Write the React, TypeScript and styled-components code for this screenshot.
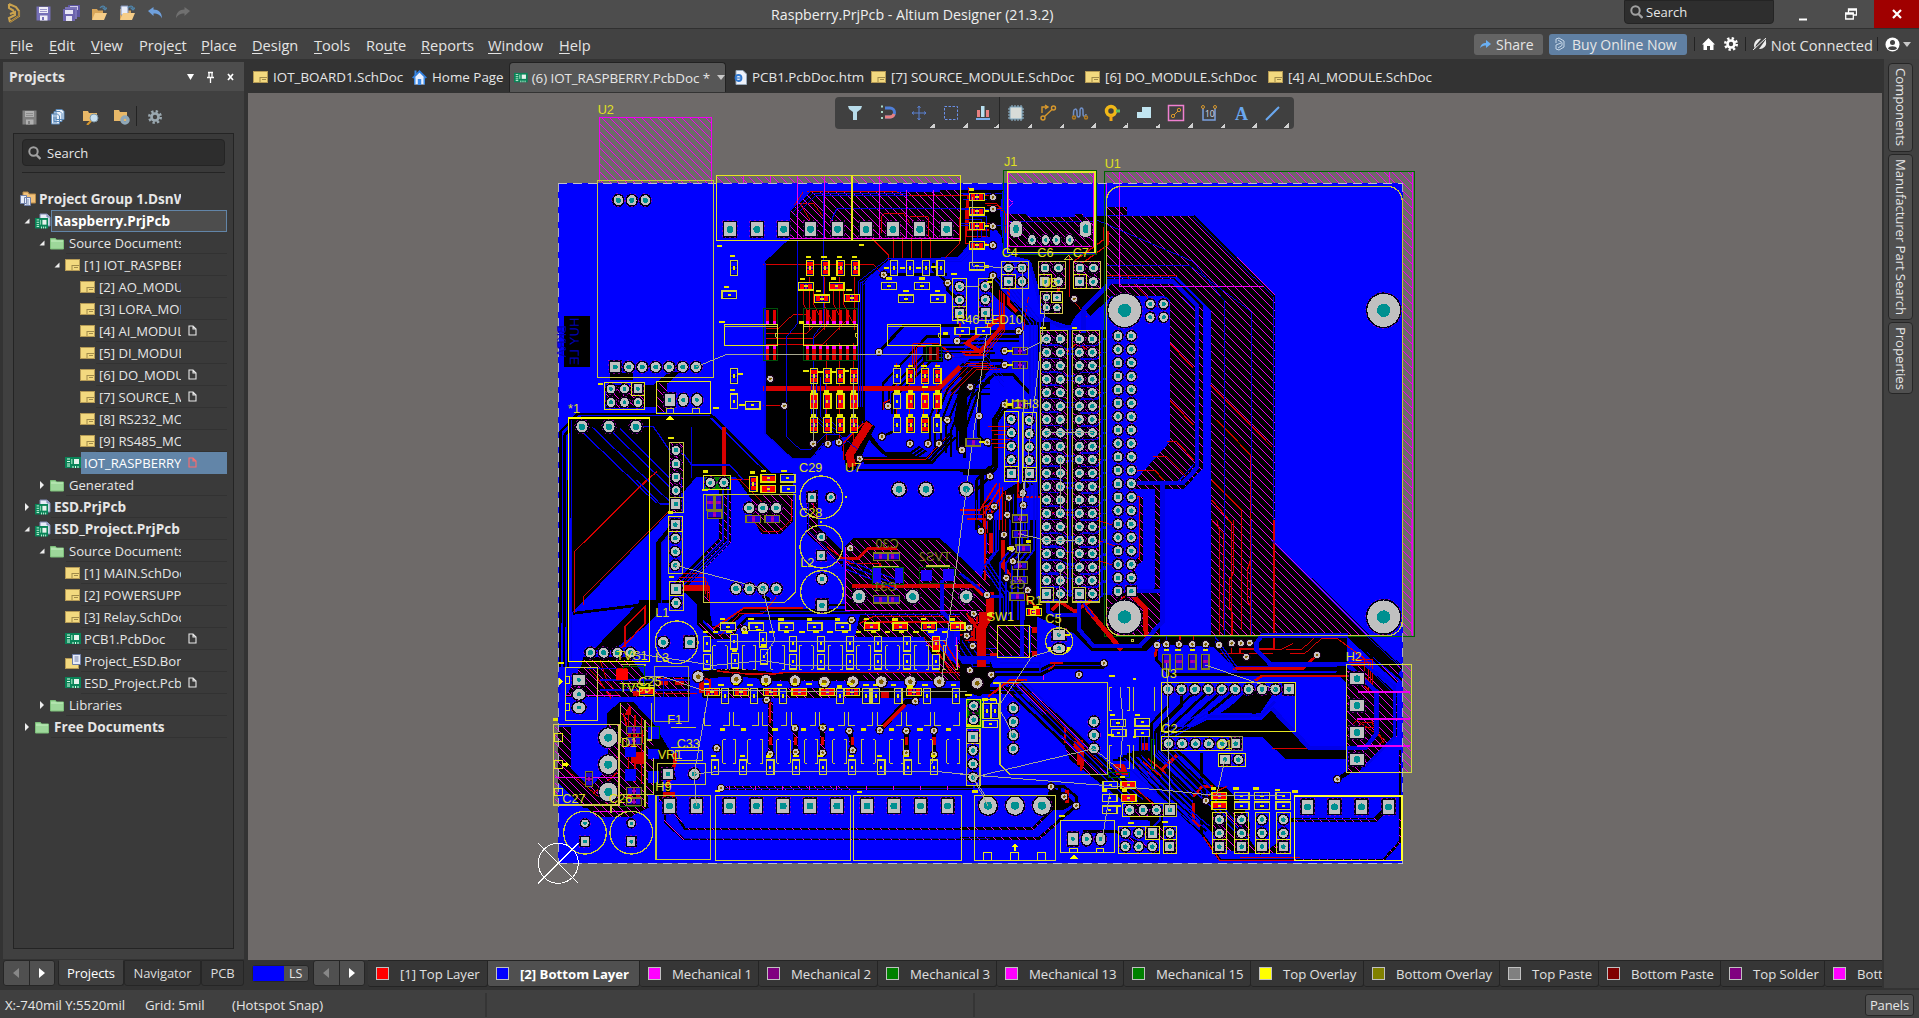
import React from 'react';
import styled, { createGlobalStyle, css } from 'styled-components';

const UI = `"Open Sans", "Noto Sans", sans-serif`;

const GlobalStyle = createGlobalStyle`
  * { box-sizing: border-box; }
  html, body { margin: 0; padding: 0; background: #333; overflow: hidden; }
  body { font-family: ${UI}; color: #e6e6e6; }
`;

/* ---------- shell ---------- */
const Shell = styled.div`
  width: 1919px; height: 1018px; display: flex; flex-direction: column; overflow: hidden; background: #333;
`;
const TitleBar = styled.header`
  height: 29px; flex: none; display: flex; background: #4d4d4d; border-bottom: 1px solid #303030;
`;
const QuickIcons = styled.div`
  width: 771px; display: flex; align-items: center; padding: 0 0 2px 6px;
`;
const QuickCell = styled.span<{ $w: number }>`
  width: ${p => p.$w}px; display: flex; align-items: center;
`;
const WindowTitle = styled.div`
  width: 853px; line-height: 29px; font-size: 14.2px; letter-spacing: 0; white-space: nowrap; color: #efefef;
`;
const TitleSearch = styled.div`
  width: 150px; height: 24px; background: #2e2e2e; border: 1px solid #242424; border-radius: 0 0 4px 4px;
  display: flex; align-items: center; gap: 3px; padding-left: 5px; font-size: 13px;
`;
const WinButton = styled.div<{ $w: number; $close?: boolean }>`
  width: ${p => p.$w}px; height: 28px; display: flex; align-items: center; justify-content: center;
  background: ${p => (p.$close ? '#a00000' : 'transparent')};
`;
const MenuBar = styled.nav`
  height: 30px; flex: none; display: flex; align-items: center; background: #424242; padding-left: 10px;
`;
const MenuItem = styled.span<{ $w: number }>`
  width: ${p => p.$w}px; font-size: 14.6px; line-height: 30px; padding-top: 1px; white-space: nowrap; color: #e4e4e4;
  u { text-underline-offset: 2px; }
`;
const MenuRight = styled.div`
  margin-left: auto; display: flex; align-items: center; padding-right: 8px; height: 30px;
`;
const Pill = styled.div<{ $w: number; $blue?: boolean; $gap: number }>`
  width: ${p => p.$w}px; height: 21px; border-radius: 3px; display: flex; align-items: center; gap: ${p => p.$gap}px;
  padding-left: 6px; margin-right: 6px; font-size: 14px; white-space: nowrap;
  background: ${p => (p.$blue ? '#6080a3' : '#646464')};
`;
const Divider = styled.i<{ $l: number; $r: number; $h?: number }>`
  width: 1px; height: ${p => p.$h ?? 14}px; background: #232323; margin: 0 ${p => p.$r}px 0 ${p => p.$l}px; flex: none;
`;
const Body = styled.div`
  height: 929px; flex: none; display: flex;
`;

/* ---------- left panel ---------- */
const LeftColumn = styled.aside`
  width: 248px; padding: 3px 4px 0 3px; display: flex; flex-direction: column; flex: none;
`;
const PanelHead = styled.div`
  height: 29px; flex: none; background: #4d4d4d; display: flex; align-items: center; padding-left: 6px;
  font-weight: 700; font-size: 13.8px;
`;
const PanelHeadTitle = styled.span`width: 178px; flex: none;`;
const PanelBody = styled.div`
  height: 868px; background: #404040; padding: 15px 10px 10px; display: flex; flex-direction: column;
`;
const PanelTools = styled.div`
  height: 27px; display: flex; align-items: flex-start; padding-left: 9px;
`;
const ToolCell = styled.span<{ $w: number }>`
  width: ${p => p.$w}px; display: flex; height: 22px; align-items: center;
`;
const TreeBox = styled.div`
  flex: 1; background: #3a3a3a; border: 1px solid #242424; padding: 5px 0 0; overflow: hidden;
`;
const TreeSearch = styled.div`
  margin: 0 8px; height: 27px; border-radius: 4px; background: #2d2d2d; border: 1px solid #242424;
  display: flex; align-items: center; gap: 6px; padding-left: 5px; font-size: 13px;
`;
const TreeRule = styled.div`height: 1px; margin: 6px 8px 15px; background: #242424;`;
const Row = styled.div<{ $indent: number }>`
  height: 22px; display: flex; align-items: center; padding-left: ${p => p.$indent}px;
`;
const ArrowCell = styled.span`width: 15px; padding-left: 4px; display: flex; flex: none;`;
const IconCell = styled.span`width: 16px; display: flex; flex: none;`;
const Label = styled.div<{ $w: number; $mode?: 'focus' | 'select'; $rule: boolean }>`
  width: ${p => p.$w}px; height: 22px; display: flex; align-items: center; padding-left: 3px; flex: none;
  border-bottom: 1px solid ${p => (p.$rule ? '#323232' : 'transparent')};
  ${p => p.$mode === 'focus' && css`background: #4d4d4d; border: 1px solid #6285a8; padding-left: 2px; color: #fff;`}
  ${p => p.$mode === 'select' && css`background: #6285a8; border-color: #6285a8; color: #fff;`}
`;
const Name = styled.span<{ $w: number; $bold?: boolean }>`
  width: ${p => p.$w}px; overflow: hidden; white-space: nowrap; font-size: ${p => (p.$bold ? 13.6 : 13.1)}px;
  font-weight: ${p => (p.$bold ? 700 : 400)}; line-height: 20px; flex: none; margin-right: 7px;
`;
const BottomTabs = styled.div`
  height: 27px; display: flex; margin-top: 1px; padding-top: 0;
`;
const ArrowPair = styled.div<{ $w: number }>`
  width: ${p => p.$w}px; height: 26px; display: flex; background: #505050; border: 1px solid #262626; border-radius: 3px; flex: none;
  span { flex: 1; display: flex; align-items: center; justify-content: center; }
  span + span { border-left: 1px solid #262626; }
`;
const PanelTab = styled.div<{ $w: number; $active?: boolean }>`
  width: ${p => p.$w}px; height: 26px; text-align: center; line-height: 25px; font-size: 13px; letter-spacing: -0.1px;
  background: ${p => (p.$active ? '#404040' : '#333')}; border: 1px solid #262626; border-top-color: ${p => (p.$active ? '#404040' : '#262626')};
  color: ${p => (p.$active ? '#fff' : '#dcdcdc')}; border-radius: 0 0 3px 3px;
`;

/* ---------- center ---------- */
const Center = styled.main`width: 1634px; flex: none; display: flex; flex-direction: column;`;
const DocTabs = styled.div`height: 34px; flex: none; display: flex; padding: 3px 0 0 5px;`;
const DocTab = styled.div<{ $w: number; $gap: number; $active?: boolean }>`
  width: ${p => p.$w}px; height: 30px; display: flex; align-items: center; gap: ${p => p.$gap}px; font-size: 13.4px;
  white-space: nowrap; flex: none;
  ${p => p.$active && css`background: #575757; border: 1px solid #222; border-bottom: 0; border-radius: 4px 4px 0 0; padding-left: 4px; margin-right: 8px; letter-spacing: -0.06px;`}
`;
const TabCaret = styled.i`
  border: 4.5px solid transparent; border-top: 5px solid #c8c8c8; border-bottom: 0; margin-left: 3px;
`;
const Canvas = styled.section`
  height: 867px; flex: none; background: #6e6a69; position: relative; overflow: hidden;
  > svg { display: block; }
`;
const ActiveBar = styled.div`
  position: absolute; left: 587px; top: 4px; width: 459px; height: 32px; background: #404040; border-radius: 4px;
  display: flex; padding-left: 4px;
`;
const ActiveCell = styled.span<{ $menu?: boolean; $line?: boolean }>`
  width: 32.15px; height: 32px; display: flex; align-items: center; justify-content: center; flex: none;
  ${p => p.$menu && css`background: linear-gradient(135deg, transparent 50%, #d0d0d0 50%) right 0 bottom 1px / 5px 5px no-repeat;`}
  ${p => p.$line && css`border-right: 1px solid #262626;`}
`;
const LayerBar = styled.div`height: 28px; flex: none; display: flex; padding-left: 4px; overflow: hidden;`;
const LayerSet = styled.div`
  width: 57px; height: 17px; margin: 5px 4px 0 0; display: flex; background: #505050; border: 1px solid #282828; border-radius: 3px; flex: none;
  font-size: 12.5px; line-height: 16px;
  i { width: 31px; background: #00f; margin-right: 5px; }
`;
const LayerTab = styled.div<{ $w: number; $active?: boolean }>`
  width: ${p => p.$w}px; height: 27px; flex: none; display: flex; align-items: center; gap: 11px; padding-left: 8px;
  font-size: 13.2px; letter-spacing: -0.02px; white-space: nowrap; border: 1px solid #242424; border-left-width: 0; border-radius: 0 0 3px 3px;
  background: ${p => (p.$active ? '#505050' : '#363636')}; font-weight: ${p => (p.$active ? 700 : 400)};
  color: ${p => (p.$active ? '#fff' : '#e0e0e0')};
`;
const Swatch = styled.i<{ $c: string }>`
  width: 13px; height: 13px; border: 1px solid #c0c0c0; background: ${p => p.$c}; flex: none;
`;

/* ---------- right & status ---------- */
const RightBar = styled.aside`
  flex: 1; padding: 4px 6px 0; display: flex; flex-direction: column; gap: 2px; align-items: flex-end;
  background: linear-gradient(90deg, #333 2px, #404040 2px);
`;
const SideTab = styled.div<{ $h: number }>`
  width: 25px; height: ${p => p.$h}px; writing-mode: vertical-rl; text-align: center; line-height: 23px; font-size: 13.2px;
  background: #505050; border: 1px solid #262626; border-radius: 4px; letter-spacing: -0.1px; white-space: nowrap;
`;
const Status = styled.footer`
  height: 30px; background: #404040; border-top: 2px solid #333; display: flex; align-items: center; padding: 1px 0 0 5px;
  font-size: 13.2px; position: relative; flex: none;
`;
const StatusCell = styled.span<{ $w: number }>`width: ${p => p.$w}px; white-space: nowrap; letter-spacing: 0;`;
const StatusRule = styled.i<{ $r: number }>`width: 2px; height: 24px; background: #353535; margin-right: ${p => p.$r}px;`;
const PanelsButton = styled.div`
  width: 49px; height: 22px; background: #505050; border: 1px solid #262626; border-radius: 3px; line-height: 20px; text-align: center;
  font-size: 13px; letter-spacing: -0.1px;
`;

/* ---------- icons ---------- */
const Magnifier = () => (
  <svg width="13" height="14" viewBox="0 0 13 14"><circle cx="5.5" cy="5.5" r="4.2" fill="none" stroke="#a0a0a0" strokeWidth="2" /><path d="M8.5 9l4 4" stroke="#a0a0a0" strokeWidth="2.4" /></svg>
);
const SchIcon = () => (
  <svg width="15" height="12" viewBox="0 0 15 12"><rect x=".5" y=".5" width="14" height="11" fill="#f3d97f" stroke="#b59a55" /><path d="M7 6.500h7M9 8.500h4M7 6v5" stroke="#a08a4a" /></svg>
);
const PcbShape = ({ y = 0 }: { y?: number }) => (
  <g transform={`translate(0 ${y})`}><rect width="16" height="11" fill="#0a8458" /><path d="M2 2h3M2 4.500h3M2 7h3M2 9h3M8 9v2M10.500 9v2M13 9v2" stroke="#d8ffe8" /><rect x="9" y="2" width="5" height="5" fill="#e6f3ec" /><rect x="6" y="2" width="1.500" height="5" fill="#7fd0a8" /></g>
);
const PcbIcon = () => <svg width="16" height="12" viewBox="0 0 16 12"><PcbShape /></svg>;
const PrjIcon = () => (
  <svg width="16" height="16" viewBox="0 0 16 16"><path d="M5 1h7l3 3v9H5z" fill="#e8ecf8" stroke="#7d86b0" /><path d="M12 1v3h3" fill="#aab4d8" stroke="#7d86b0" /><g transform="translate(0 5) scale(.82 .95)"><PcbShape /></g></svg>
);
const FolderIcon = () => (
  <svg width="14" height="13" viewBox="0 0 14 13"><path d="M.5 12V1.500h5l1 1.500h7v9z" fill="#9dd79a" stroke="#7cbf7a" /><path d="M1 4h12" stroke="#c6f0c2" /></svg>
);
const GroupIcon = () => (
  <svg width="16" height="16" viewBox="0 0 16 16"><path d="M3 1h5l1 2h6.500v9H3z" fill="#f0c07a" stroke="#b98b48" /><path d="M.5 4.500h6v8h-6zM4.500 6.500h6v8h-6z" fill="#e6ecf8" stroke="#6f7fa8" /><path d="M6 9h3M6 11h3M6 13h3" stroke="#7f90b8" /></svg>
);
const BomIcon = () => (
  <svg width="16" height="15" viewBox="0 0 16 15"><rect x=".5" y="4.500" width="13" height="10" fill="#f3d97f" stroke="#b59a55" /><path d="M7.500.5h8v10h-8z" fill="#e8ecf8" stroke="#6f7fa8" /><path d="M9.500 3h4M9.500 5h4M9.500 7h4" stroke="#6f7fa8" /></svg>
);
const DocMark = ({ c = '#e8e8e8' }: { c?: string }) => (
  <svg width="9" height="11" viewBox="0 0 9 11"><path d="M1 1h4l3 3v6H1zM5 1v3h3" fill="none" stroke={c} strokeWidth="1.100" /></svg>
);
const Twist = ({ open }: { open: boolean }) => (
  <svg width="6" height="8" viewBox="0 0 6 8">{open ? <path d="M5.500 1.500v5H.5z" fill="#eee" /> : <path d="M1 0v8l4-4z" fill="#eee" />}</svg>
);
const Tri = ({ left, c }: { left?: boolean; c: string }) => (
  <svg width="6" height="10" viewBox="0 0 6 10"><path d={left ? 'M6 0v10L0 5z' : 'M0 0v10l6-5z'} fill={c} /></svg>
);
const Disk = ({ c, l }: { c: string; l: string }) => (
  <svg width="15" height="15" viewBox="0 0 15 15"><path d="M.5.5h14v14H.5z" fill={c} /><path d="M3 1h9v6H3z" fill={l} /><path d="M4 9.500h7.500v5H4z" fill={l} /><path d="M6 11h2v3H6z" fill={c} /><path d="M4 3.500h7M4 5.500h7" stroke={c} strokeWidth=".7" /></svg>
);
const DiskStack = () => (
  <svg width="17" height="16" viewBox="0 0 17 16"><path d="M5 0h12v12H5z" fill="#5d55a0" /><path d="M7 1h8v4H7z" fill="#cfcbe8" /><path d="M2 2h12v12H2z" fill="#7b74b8" /><path d="M0 4h12v12H0z" fill="#6c64ae" /><path d="M2 5h8v4H2zM3 11h6v5H3z" fill="#e8e6f6" /></svg>
);
const OpenFolder = ({ doc }: { doc?: boolean }) => (
  <svg width="16" height="16" viewBox="0 0 16 16"><path d="M1 15V4h5l1 1.500h5V8" fill="#d9a65a" />{doc && <path d="M2 1h7v9H2z" fill="#e8ecf8" stroke="#7f90b8" />}<path d="M1 15L4 8h12l-3 7z" fill="#f6cd88" /><path d="M9 3c2-3 5-2 5 0m-2 0h4l-2 2z" fill="none" stroke="#4f83a8" strokeWidth="1.200" /></svg>
);
const Undo = ({ c, flip }: { c: string; flip?: boolean }) => (
  <svg width="15" height="13" viewBox="0 0 15 13"><path transform={flip ? 'matrix(-1 0 0 1 15 0)' : undefined} d="M0 4l5.500-4v2.500c5 0 8.500 3 8.500 9-1.500-3.500-4-5-8.500-5V9z" fill={c} /></svg>
);
const Gear = ({ s, c, h }: { s: number; c: string; h: string }) => (
  <svg width={s} height={s} viewBox="0 0 16 16"><circle cx="8" cy="8" r="6.500" fill="none" stroke={c} strokeWidth="3" strokeDasharray="2.600 2.500" /><circle cx="8" cy="8" r="5.500" fill={c} /><circle cx="8" cy="8" r="2.500" fill={h} /></svg>
);
const House = ({ blue }: { blue?: boolean }) => blue ? (
  <svg width="15" height="16" viewBox="0 0 15 16"><path d="M2.500 8v7.500h10V8l-5-5z" fill="#e8f0ff" /><path d="M0 8.500L7.500 1 15 8.500l-1.500 1-6-6-6 6z" fill="#2f7fe0" /><path d="M2.500 1.500h2V5l-2 1.500zM5.800 10h3.400v6H5.800zM2 9v6.500h1.500V8zM13 9v6.500h-1.500V8z" fill="#3d8be8" /></svg>
) : (
  <svg width="13" height="12" viewBox="0 0 13 12"><path d="M6.500 0L13 6.500h-1.500V12H8V8H5v4H1.500V6.500H0z" fill="#fff" /></svg>
);
const Logo = () => (
  <svg width="15" height="20" viewBox="0 0 15 20"><path d="M3 1l7 3 3 4v5L4 19M4 19l-1-4 6-3V9L4 11M3 1v4l5 3" fill="none" stroke="#c9a24e" strokeWidth="2.100" /><path d="M13 8v5L4 19" stroke="#8d6c30" strokeWidth="1" fill="none" /></svg>
);

/* ---------- left tree data ---------- */
type Node = { i: number; t: string; k: 'group' | 'prj' | 'folder' | 'sch' | 'pcb' | 'bom'; o?: boolean; b?: boolean; m?: 'focus' | 'select'; d?: string; n?: boolean };
const tree: Node[] = [
  { i: 20, t: 'Project Group 1.DsnWrk', k: 'group', b: true, n: true },
  { i: 35, t: 'Raspberry.PrjPcb', k: 'prj', o: true, b: true, m: 'focus' },
  { i: 50, t: 'Source Documents', k: 'folder', o: true },
  { i: 65, t: '[1] IOT_RASPBERRY', k: 'sch', o: true },
  { i: 80, t: '[2] AO_MODULE', k: 'sch' },
  { i: 80, t: '[3] LORA_MODULE', k: 'sch' },
  { i: 80, t: '[4] AI_MODULE', k: 'sch', d: '#e8e8e8' },
  { i: 80, t: '[5] DI_MODULE', k: 'sch' },
  { i: 80, t: '[6] DO_MODULE', k: 'sch', d: '#e8e8e8' },
  { i: 80, t: '[7] SOURCE_MODULE', k: 'sch', d: '#e8e8e8' },
  { i: 80, t: '[8] RS232_MODULE', k: 'sch' },
  { i: 80, t: '[9] RS485_MODULE', k: 'sch' },
  { i: 65, t: 'IOT_RASPBERRY.PcbDoc', k: 'pcb', m: 'select', d: '#ff6a6a' },
  { i: 50, t: 'Generated', k: 'folder', o: false },
  { i: 35, t: 'ESD.PrjPcb', k: 'prj', o: false, b: true },
  { i: 35, t: 'ESD_Project.PrjPcb', k: 'prj', o: true, b: true },
  { i: 50, t: 'Source Documents', k: 'folder', o: true },
  { i: 65, t: '[1] MAIN.SchDoc', k: 'sch' },
  { i: 65, t: '[2] POWERSUPPLY', k: 'sch' },
  { i: 65, t: '[3] Relay.SchDoc', k: 'sch' },
  { i: 65, t: 'PCB1.PcbDoc', k: 'pcb', d: '#e8e8e8' },
  { i: 65, t: 'Project_ESD.BomDoc', k: 'bom' },
  { i: 65, t: 'ESD_Project.PcbDoc', k: 'pcb', d: '#e8e8e8' },
  { i: 50, t: 'Libraries', k: 'folder', o: false },
  { i: 35, t: 'Free Documents', k: 'folder', o: false, b: true },
];
const iconFor = { group: GroupIcon, prj: PrjIcon, folder: FolderIcon, sch: SchIcon, pcb: PcbIcon, bom: BomIcon };

const layers: [string, string, number, boolean?][] = [
  ['[1] Top Layer', '#ff0000', 120], ['[2] Bottom Layer', '#0000ff', 152, true], ['Mechanical 1', '#ff00ff', 119],
  ['Mechanical 2', '#800080', 119], ['Mechanical 3', '#008000', 119], ['Mechanical 13', '#ff00ff', 127],
  ['Mechanical 15', '#008000', 127], ['Top Overlay', '#ffff00', 113], ['Bottom Overlay', '#808000', 136],
  ['Top Paste', '#808080', 99], ['Bottom Paste', '#800000', 122], ['Top Solder', '#800080', 104], ['Bottom Solder', '#ff00ff', 130],
];

/* ---------- board data: four tiles, each unit a third of a pixel ---------- */
type Trace = [string, number, number?, number?, number?];
type Dot = [number, number, number?];
type Pad = [number, number, number, number, number, boolean?];
type Part = [number, number, 'v' | 'h', 'r' | 'b' | 'o'];
type Box = [number, number, number, number, string?, number?];
type Tag = [number, number, string, boolean?];
interface Tile {
  x: number; y: number; voids: string[]; cuts: Trace[]; hatch: string[]; blue: Trace[]; red: Trace[]; mag: Trace[];
  green: Box[]; boxes: Box[]; lines: Trace[]; fills: [string, string][]; pads: Pad[]; vias: Dot[]; parts: Part[]; rats: string[]; tags: Tag[]; blobs: Dot[];
}
const run = (x: number, y: number, dx: number, dy: number, n: number, w: number, h: number, o: number, sq?: number): Pad[] =>
  Array.from({ length: n }, (_, i) => [x + dx * i, y + dy * i, w, h, o, sq === -1 || sq === i] as Pad);
const grid = (xs: number[], y: number, k: 'v' | 'h', c: 'r' | 'b' | 'o'): Part[] => xs.map(x => [x, y, k, c] as Part);
const pairs = (xs: number[], y1: number, y2: number): Trace[] =>
  xs.map((x, i) => [i % 2 ? `M${x - 8},${y1}H${x}V${y2}H${x - 8}` : `M${x + 8},${y1}H${x}V${y2}H${x + 8}`, 3] as Trace);
const rowsY = Array.from({ length: 20 }, (_, i) => 627 + 40.250 * i);

const A: Tile = {
  x: 530, y: 90,
  voids: [
    'M780,365L843,305H1380V440L1330,445L1285,500L1075,510L1000,578V990L950,1040L885,1060L845,1108H785L705,1030V515L780,445Z',
    'M240,850H310V885H370L420,845H450L385,910V950H310V870H240Z', 'M1180,770H1240V815H1180Z', 'M382,880H410V965H382Z',
    'M1270,1000L1295,860L1380,790V840L1310,900V1060Z', 'M228,885H340V955H228Z', 'M935,1070L1010,990L1035,1010L975,1140H950Z',
  ],
  cuts: [
    ['M92,1600V1025L142,972H540L720,1150', 7, 2, 12, 10], ['M985,560V1000L1030,1060L1060,1090H1140L1170,1070', 6, 3, 9, 6],
    ['M1047,786L1120,708H1290', 9], ['M1060,960V880L1190,740H1260', 7], ['M1078,960V900L1210,765H1380', 6, 3, 8, 12],
    ['M1300,820L1240,880L1200,980V1060', 6, 5, 16, 10], ['M1296,890V1080', 8], ['M1253,579L1210,540V520', 8], ['M721,867V890L763,948', 7],
    ['M985,1106H1190L1260,1030', 7, 3, 8, 6], ['M1310,830L1250,900', 6, 6, 14, 6], ['M980,1140H1380', 8], ['M1330,880H1380', 5, 3, 0, 16],
    ['M1056,1040L1100,1020V980', 7], ['M300,850V870', 20], ['M430,1110L520,1140H610L700,1190', 10], ['M1347,978V1040L1380,1070', 9],
    ['M1061,554H1250', 7], ['M1253,579V600L1285,630', 9],
  ],
  hatch: ['M210,82H546V281H210Z', 'M560,260H1292V446H560Z', 'M228,880H340V955H228Z', 'M382,880H540V968H382Z', 'M420,1060H460V1265H420Z'],
  blue: [
    ['M705,520V1030L785,1105H845L880,1060H945', 4], ['M803,450V700L770,740V1040L810,1078H842L885,1035H930L985,1080', 3], ['M880,300V700L850,740V860', 3],
    ['M985,575V950', 3, 3, 7, 0], ['M985,575L1075,505H1280L1320,465', 3, 3, 7, 5], ['M780,360L840,302H1120', 3, 3, 8, 8], ['M905,390L920,356H1320', 4],
    ['M845,860V980L900,1030', 3, 4, 14, 0], ['M140,1010L380,1240', 4, 3, 45, 0], ['M330,1010H370L425,1090H460L485,1125H600L640,1170', 4], ['M270,1015L420,1165H440', 4],
    ['M1300,300L1370,300', 3, 3, 0, 14], ['M1320,380H1370V440', 3, 3, -14, 10], ['M1220,770H1300L1380,720', 3, 4, 0, 11], ['M125,1600V1000', 4], ['M485,1010V1165', 3],
  ],
  red: [
    ['M700,896H1225L1290,830', 14], ['M1018,1000L992,1040L958,1095L968,1130', 24], ['M581,1010V1155', 12],
    ['M700,523H1030L1050,545', 3], ['M830,305H1100L1120,318H1380', 3], ['M1010,430L1075,495V510', 4], ['M1090,440V510', 3, 5, 28, 0], ['M1290,380V460L1240,510', 3],
    ['M1055,430V380L1065,370H1120L1140,400', 3], ['M1140,380H1195V440', 3], ['M820,600V640L850,700', 3, 5, 30, 0], ['M840,560V720', 3, 4, 45, 0],
    ['M700,716H745L790,673H835', 3], ['M700,730H830L850,710', 3], ['M700,746H850L890,705', 3], ['M700,765H875L950,690', 3], ['M850,760V860', 3, 4, 40, 0],
    ['M850,880V1060', 3, 4, 40, 0], ['M700,948H763', 3], ['M940,1110V1060L1000,1000', 4], ['M1315,290V400H1380', 4, 4, -3, 20], ['M790,350L820,305', 3], ['M840,390L810,340H850L880,380', 3],
    ['M1060,960L1060,940L1080,930', 4], ['M1100,1030V820', 3, 4, 40, 0], ['M1160,860V770H1240L1270,800', 3, 3, -6, -4], ['M1230,900L1310,820H1380', 3, 4, 10, 6],
    ['M1000,1110H1185L1250,1040', 3], ['M1290,740V700', 5], ['M320,1200L380,1145', 4], ['M600,1168H660', 3],
  ],
  mag: [['M210,82H546V278M210,82V275', 3], ['M641,258V280M722,258V280M803,258V446M884,258V446M1048,258V446M1130,300V446M1211,300V446M780,446H1290', 3]],
  green: [[700, 656, 43, 156, '#00500a'], [821, 656, 162, 156, '#00500a'], [1190, 770, 45, 42, '#00500a']],
  boxes: [
    [203, 271, 348, 592, '#c8c83c'], [560, 257, 405, 194], [969, 257, 323, 194], [583, 704, 160, 62], [821, 704, 162, 62], [1072, 704, 160, 62],
    [223, 878, 121, 80], [305, 878, 39, 40], [380, 874, 163, 96], [409, 957, 22, 13, '#c8c83c'], [488, 957, 22, 13, '#c8c83c'],
    [116, 985, 243, 730, '#ffff00', 5], [418, 1057, 43, 210, '#c8c83c'], [1268, 566, 41, 127, '#c8c83c'], [1268, 650, 41, 43, '#c8c83c'], [1345, 566, 42, 127, '#c8c83c'],
    [520, 1157, 82, 42],
  ],
  lines: [['M583,710H743M821,710H983M1072,710H1232', 3], ['M743,728A8,8 0 0 0 743,744M983,728A8,8 0 0 0 983,744M1232,728A8,8 0 0 0 1232,744', 3]],
  fills: [['#000', 'M102,678H180V831H102Z'], ['#008000', 'M524,1160H600V1200H524Z'], ['#ffff00', 'M407,990H433L420,976Z']],
  pads: [
    ...run(265, 331, 40.5, 0, 3, 29, 31, 15), ...run(256, 831, 40.4, 0, 7, 30, 30, 15, 0), ...run(243, 897, 40.5, 0, 3, 26, 27, 12, 2), ...run(243, 937, 40.5, 0, 3, 26, 27, 12),
    ...run(419, 930, 41, 0, 3, 30, 37, 12, 0), ...run(156, 1010, 81, 0, 3, 34, 35, 19), ...run(438, 1081, 0, 40.3, 5, 27, 28, 14, 4),
    ...run(600, 418, 80.6, 0, 5, 34, 42, 21, -1), ...run(1008, 418, 80.7, 0, 4, 34, 42, 21, -1), ...run(1289, 590, 0, 40, 3, 27, 27, 13, 2), ...run(1366, 590, 0, 40, 3, 27, 27, 13, 2),
    ...run(541, 1178, 41, 0, 2, 28, 28, 13), ...run(1107, 1198, 81, 0, 2, 40, 40, 20), [1309, 1198, 40, 40, 20],
  ],
  vias: [[1061, 554], [1253, 579], [1047, 786], [1254, 799], [1281, 753], [721, 867], [763, 948], [1074, 948], [1252, 990], [1321, 891], [1347, 978], [1295, 1079], [1056, 1040], [989, 1106], [1140, 1061], [1194, 1061], [1227, 1061], [850, 1061], [894, 1061], [927, 1057], [1371, 1056]],
  parts: [
    ...grid([840, 886, 932, 976], 534, 'v', 'r'), ...grid([612, 1092, 1140, 1188, 1232], 534, 'v', 'b'), [828, 589, 'h', 'r'], [920, 589, 'h', 'r'], [876, 626, 'h', 'r'], [966, 624, 'h', 'r'],
    [598, 614, 'h', 'b'], [1077, 588, 'h', 'b'], [1176, 588, 'h', 'b'], [1128, 626, 'h', 'b'], [1223, 626, 'h', 'b'],
    ...[858, 934, 1005].flatMap(y => grid([852, 892, 931, 972], y, 'v', 'r')), ...[858, 934, 1005].flatMap(y => grid([1142, 1185], y, 'v', 'r')),
    ...grid([1101], 858, 'v', 'b'), ...grid([1101], 934, 'v', 'b'), ...grid([1101, 1222], 1005, 'v', 'b'), ...grid([1222], 858, 'v', 'r'), ...grid([1222], 934, 'v', 'r'),
    [612, 858, 'v', 'b'], [612, 934, 'v', 'b'], [668, 946, 'h', 'b'], [1341, 321, 'h', 'r'], [1341, 364, 'h', 'r'], [1341, 408, 'h', 'r'], [1341, 466, 'h', 'r'], [1341, 529, 'h', 'b'],
    [1297, 723, 'h', 'b'], [1358, 723, 'h', 'b'], [1329, 1056, 'h', 'o'], [670, 1182, 'v', 'r'], [715, 1165, 'h', 'r'], [773, 1165, 'h', 'b'],
  ],
  rats: ['M498,831L590,793H1222', 'M1375,690L1309,1198', 'M1328,321V529H1380', 'M1289,590H1366', 'M852,860V1060', 'M972,860V1005'],
  tags: [[203, 72, 'U2'], [114, 968, '*1'], [807, 1145, 'C29'], [945, 1145, 'U7'], [1278, 703, 'R46']],
  blobs: [[608, 499], [836, 501], [882, 501], [928, 501], [974, 501], [568, 469], [995, 466], [1325, 299], [1272, 553], [576, 697], [814, 698], [1070, 534], [1118, 534], [1166, 534], [1212, 532], [818, 568], [910, 566], [866, 603], [957, 601], [589, 591], [1077, 566], [1176, 566], [1128, 604], [1223, 604], [632, 853], [828, 843], [870, 846], [912, 846], [950, 843], [608, 901], [636, 946], [1101, 828], [1142, 828], [1182, 828], [1222, 828], [850, 905], [890, 905], [930, 905], [970, 905], [1101, 905], [1142, 905], [1185, 892], [1222, 905], [850, 977], [892, 977], [930, 977], [970, 977], [1101, 977], [1142, 977], [1185, 977], [1222, 977], [558, 955], [211, 883], [423, 1044], [527, 1145], [667, 1148], [700, 1143], [762, 1143], [1247, 731]],
};

const B: Tile = {
  x: 960, y: 130,
  voids: [
    'M412,259H700L940,497V1230L1230,1515H752V540L650,440H439V373H412Z', 'M480,468H630L702,540V1000L655,1052H525L630,935V510L600,488H480Z',
    'M147,253H197L210,262H345V253H370V262H412V367H147Z', 'M-60,180H128L120,240L130,370L210,390L235,470L245,560L330,588L345,560L437,470V373H131V330L110,300H-20Z',
    'M242,600H440V1416H242Z', 'M439,230H500V255H439Z',
  ],
  cuts: [
    ['M439,458H640L715,530V1010L665,1065H520', 26], ['M600,1060V1400', 28], ['M545,1100V1290L520,1310', 8], ['M380,545L450,480H640', 34], ['M90,440V480L200,580H240V1100', 9, 4, 9, 0],
    ['M0,605H176', 8, 3, 0, 14], ['M0,740L30,710H130', 8, 2, 0, -18], ['M60,858V780L100,735H160L210,790', 9], ['M0,1022H85L100,1005V870L130,824H200', 10, 2, 8, 8],
    ['M-10,960V880L40,740', 7, 3, 12, 12], ['M50,1200V1080L90,1039', 10], ['M130,1200V1090L180,1060', 9, 4, 12, 0], ['M70,1200V1130L90,1110', 8, 3, 14, 10], ['M700,259L941,495V1230', 9],
  ],
  hatch: ['M147,128H400V350H147Z', 'M439,124H1358V1517H439Z', 'M242,601H322V1416H242Z', 'M338,601H419V1416H338Z', 'M125,395H207V475H125ZM235,395H317V475H235ZM340,395H422V475H340Z', 'M135,848H228V1053H135Z'],
  blue: [
    ['M439,455H640L712,528V1012L668,1060H520', 13], ['M608,1060V1400', 13], ['M370,610V540L450,458', 14], ['M439,408H690L874,545V1150', 3], ['M410,270L700,395L795,515V1500', 3],
    ['M700,262L940,500V1230', 3], ['M210,400L250,560L300,590H350', 10], ['M100,440L210,580V1100', 4, 4, 10, -3], ['M0,190H150', 3, 3, 0, 48], ['M150,275H400', 3],
    ['M0,680H80L130,740', 3, 3, 0, 15], ['M230,790V1400', 6], ['M330,600V1400', 5], ['M425,600V1400', 6], ['M195,1060V1200', 5, 3, 14, 0],
    ...rowsY.map((y, i) => [`M${245},${y + 18}H${300}L${316},${y + (i % 2 ? 4 : 30)}H${350}L365,${y + 20}H410L430,${y}H470`, 5] as Trace),
  ],
  red: [
    ['M439,438H650', 3], ['M145,460V520L170,545', 10], ['M295,470V490', 10], ['M75,220H108L130,240V300', 3, 3, 6, 8], ['M340,395L430,330V290', 4, 2, 14, 14],
    ['M0,665H60L120,590V480', 3, 4, 5, 4], ['M20,640L125,560V590L60,665Z', 12], ['M500,440L590,530', 3], ['M620,935H650L700,990', 4], ['M580,980H620L680,1040', 4], ['M525,1021H585L610,1050', 4],
    ['M630,640L700,715', 4], ['M630,810L700,885', 4], ['M752,765L935,950', 4], ['M770,870L872,975V1500', 4], ['M755,1050L845,1140V1500', 4], ['M755,1110L815,1180V1500', 4], ['M755,1170L790,1210V1500', 3],
    ['M300,787L240,787', 3, 5, 12, 120], ['M320,667L350,640L397,667H470', 4], ['M397,787H470', 4], ['M397,990H470', 3], ['M397,870H470', 3], ['M397,1150H470', 3], ['M85,890H150M85,930H150M120,1060V1200', 3, 3, 8, 12], ['M205,500L190,600', 3], ['M225,375H330V500L380,560', 3],
    ['M525,1100H540V1290', 3], ['M0,1140H60L110,1060', 5, 3, 10, 14], ['M175,1050V1100H240', 6],
  ],
  mag: [['M439,124H1358V1517M479,124V470H911M1290,124V160M147,350H397M147,128V350M400,128V350', 3], ['M441,160V380', 3], ['M140,200L160,218L140,238', 3]],
  green: [[131, 121, 280, 252, '#006400'], [434, 124, 930, 1397, '#006400']],
  boxes: [
    [142, 126, 263, 241, '#e8e830', 4], [241, 601, 82, 815, '#c8c83c', 4], [338, 601, 81, 815, '#c8c83c', 4], [241, 1373, 40, 43, '#c8c83c'], [338, 1373, 40, 43, '#c8c83c'],
    [125, 395, 82, 80, '#d8c850'], [235, 395, 82, 80, '#d8c850'], [340, 395, 82, 80, '#d8c850'], [125, 434, 42, 41], [235, 434, 40, 41], [340, 434, 40, 41], [242, 485, 65, 65, '#d8c850'], [275, 485, 32, 32],
    [133, 845, 43, 210], [187, 847, 42, 208], [133, 1010, 43, 45], [187, 1012, 42, 43], [-22, 446, 42, 127], [55, 446, 42, 127, '#c8c83c'],
  ],
  lines: [['M484,169H1282A45,45 0 0 1 1327,214V1472A45,45 0 0 1 1282,1517H484A45,45 0 0 1 439,1472V214A45,45 0 0 1 484,169Z', 4], ['M313,388H338L326,377Z', 3]],
  fills: [],
  pads: [
    [168, 297, 34, 46, 16], [377, 297, 34, 46, 16], [216, 330, 24, 29, 11], [257, 330, 24, 29, 11], [289, 330, 24, 29, 11], [329, 330, 24, 29, 11],
    ...[146, 255, 360].flatMap(x => [...run(x, 414, 40, 0, 2, 27, 27, 13), ...run(x, 455, 40, 0, 2, 27, 27, 13, 0)]), ...run(259, 502, 32, 0, 2, 22, 22, 10, 1), ...run(259, 533, 32, 0, 2, 22, 22, 10),
    ...[260, 301, 358, 397].flatMap((x, k) => run(x, 627, 0, 40.25, 20, 27, 28, 14, k % 2 ? undefined : 19)), ...run(474, 618, 0, 40.3, 20, 27, 28, 14), ...run(514, 618, 0, 40.3, 20, 27, 28, 14, 19),
    ...run(571, 522, 40, 0, 2, 26, 27, 13), ...run(571, 562, 40, 0, 2, 26, 27, 13), [494, 541, 98, 99, 40], [1271, 541, 98, 99, 40],
    ...run(154, 868, 0, 40.3, 5, 26, 27, 13, 4), ...run(208, 871, 0, 40, 5, 26, 27, 13, 4), [19, 1078, 40, 40, 20], ...run(76, 469, 0, 40, 3, 27, 27, 13, 2),
  ],
  vias: [[99, 202], [99, 237], [99, 289], [99, 346], [99, 437], [343, 507], [176, 604], [134, 663], [134, 705], [134, 824], [31, 771], [57, 858], [82, 937], [6, 960], [90, 1039], [103, 1130], [89, 1161], [146, 1103], [188, 1090], [190, 1126], [142, 1155]],
  parts: [[180, 663, 'h', 'o'], [180, 705, 'h', 'o'], [180, 824, 'h', 'o'], [40, 937, 'h', 'o'], [180, 1166, 'h', 'o'], [70, 603, 'h', 'b']],
  rats: ['M38,202V409L186,414L190,663L260,627', 'M190,705V1010', 'M301,987V1150', 'M259,502L190,1100', 'M260,908H400'],
  tags: [[132, 108, 'J1'], [434, 113, 'U1'], [125, 382, 'C4'], [232, 382, 'C6'], [338, 382, 'C7'], [72, 582, 'LED10'], [135, 835, 'H1'], [188, 835, 'H3'], [245, 472, 'U5']],
  blobs: [[34, 180], [80, 244], [80, 288], [80, 345], [80, 410], [88, 457], [249, 595], [343, 595], [150, 663], [150, 705], [150, 824], [66, 937]],
};

const devs = (start: number) => Array.from({ length: 9 }, (_, i) => start + i * 86.2);
const C: Tile = {
  x: 530, y: 480,
  voids: [
    'M118,-185H540L720,-10H500L440,60L420,95L125,400Z', 'M610,-20H790V125L750,163H695L665,110V60Z', 'M970,175H1230L1380,315V392H946V200Z',
    'M160,530H300L345,590H480V650H300H107L150,575Z', 'M330,365H385V400L345,440L250,510H190Z', 'M232,700L268,666H310L370,730L425,820L438,900H400V960L300,1012H200L150,960L235,860V790L232,740Z',
    'M77,740H122V865L240,985H160L120,945L77,900Z', 'M990,405H1290L1300,445H1180L1240,520L1285,560V480L1340,560V640H1300L1290,600H990V575H1230L1180,470H975Z', 'M422,5H456V95H422Z', 'M830,35L865,30V140L940,215V262L830,160Z',
    'M455,320H540V400L550,450L500,400V350L455,335Z', 'M1330,330L1380,300V640H1340L1310,560L1290,500V420Z', 'M515,640H1320V650H515Z',
  ],
  cuts: [
    ['M405,1000V1025L460,1077H1400', 8], ['M435,1000L465,1047H1400', 7], ['M573,924H1330', 13], ['M505,590Q600,566 740,592H1340', 24], ['M515,632H1380', 14], ['M520,650H1310', 6],
    ['M90,0V560', 6, 3, 12, 0], ['M430,135L385,190V370', 14], ['M600,0V185L460,325', 8, 3, -14, -4], ['M550,445H580L640,395H1340', 14], ['M600,470L650,415H920', 8], ['M440,330H470L510,370V430L550,470H600', 16],
    ['M130,400L330,375V365H450', 8], ['M721,665V820', 16], ['M797,745V816', 14], ['M878,745V816', 14], ['M960,753L968,811', 14], ['M1129,755V818', 14], ['M1212,755V818', 14], ['M1156,664H1130L1049,751', 16],
    ['M1340,0V120L1375,160V300', 10, 2, 16, -20], ['M846,52V150', 26], ['M880,376H960V400', 6], ['M1236,320V400', 6], ['M1340,0L1380,-40', 8], ['M147,600V570L200,545', 6, 2, 10, 10], ['M414,900V960', 12], ['M700,326V350L720,360', 10],
  ],
  hatch: ['M523,46H795V365H523Z', 'M946,180H1380V392H946Z', 'M107,562H203V723H107Z', 'M374,560H476V722H374Z', 'M75,735H267V975H75Z', 'M270,670H370V1010H270Z', 'M160,540H345V650H160Z', 'M830,0H935V262H830Z', 'M417,0H458V390H417Z', 'M500,430H1290V570H500Z', 'M570,600H960V930H570Z', 'M378,946H1380V1141H378Z', 'M1000,400H1290V600H1000Z', 'M1310,660H1352V740H1310Z', 'M190,975H310V1015H190Z'],
  blue: [
    ['M320,0L390,72H430', 4], ['M125,-180V545', 4], ['M455,0V90', 3], ['M1236,300V395L1265,425V500L1300,545H1380', 12], ['M890,240H950L1100,300', 4, 3, 0, 14], ['M210,600H500', 4, 2, 0, 30], ['M690,395H960', 5],
    ['M1290,500L1330,560H1380', 4, 4, 6, -18], ['M1340,60V120', 5], ['M90,600V640', 5], ['M170,565H260', 4], ['M580,0V185L465,300', 4, 2, 14, 5], ['M395,370V190L430,145', 4],
    ['M340,590V650', 3, 3, 30, 0], ['M410,1000V1025L462,1075H1380', 2], ['M575,925H1330', 3], ['M835,40V150L920,235', 3],
  ],
  red: [
    ['M133,400V215L350,0', 4], ['M160,375V350L415,95', 4], ['M285,500V440L345,380V430L270,510', 4], ['M965,318H1335L1360,345', 14], ['M930,235H985L1015,205H1100', 9], ['M890,200L960,250H1050V300', 4],
    ['M670,125L700,155H745L785,120V60', 3], ['M630,0L700,70', 3], ['M460,325H540', 14], ['M440,282H520V330', 3, 4, 6, 12], ['M550,445L640,385H820', 5], ['M570,470L630,400H700L740,350', 3], ['M560,573Q700,590 760,578H1290', 5],
    ['M515,585V640', 14], ['M721,665V730', 6], ['M721,770V795', 10], ['M797,770V795', 10], ['M878,770V795', 10], ['M968,770V795', 10], ['M1129,770V795', 10], ['M1212,770V795', 10], ['M1125,675L1060,740', 9],
    ['M1065,635V655', 24], ['M990,430L1030,410H1290', 5, 2, 10, 16], ['M1320,430H1340V400', 6], ['M1358,395V560', 22], ['M1365,120V300', 7], ['M1240,480L1290,560', 4, 3, -14, 8],
    ['M270,650L230,600L210,540', 3], ['M240,640V650L200,590L170,560', 4], ['M330,600H500', 4, 2, 0, 40], ['M400,595V615', 28], ['M448,595V615', 28], ['M275,565V600', 34], ['M310,640H360', 16], ['M295,700V900', 4, 3, 20, 6], ['M280,700L320,850H345', 5],
    ['M324,815V850', 42], ['M300,750V790', 6, 4, 12, 0], ['M300,935V980', 10, 2, 24, 0], ['M410,920L435,850V820', 10], ['M190,940L260,880V830', 4], ['M110,870L235,975', 3], ['M403,940H430V965H405Z', 10], ['M300,680V700H290Z', 8], ['M505,590L540,600V640', 6],
    ['M1380,75L1360,80V140', 4, 3, 6, 10], ['M850,85V30', 3], ['M1180,470L1290,600', 3],
  ],
  mag: [['M946,200V392H1350M105,647H270M75,892H265M190,995H310', 3], ['M598,918V930M678,918V930M759,918V930M839,918V930M921,918V930M1011,918V930M1091,918V930M1172,918V930M1253,918V930', 3], ['M1280,470V560', 3]],
  green: [[1028, 262, 92, 52, '#006400'], [280, 560, 65, 60, '#006400'], [1168, 262, 105, 50, '#004800'], [345, 740, 45, 35, '#006400'], [1312, 660, 40, 80, '#008000', 6], [270, 960, 60, 20, '#006400']],
  boxes: [
    [415, 109, 43, 171, '#c8c83c'], [415, 109, 43, 45], [418, 304, 42, 87, '#c8c83c'], [418, 304, 42, 44], [107, 562, 96, 161, '#d8d040'], [107, 590, 12, 20], [107, 672, 12, 20], [374, 559, 101, 165, '#a0a050', 4],
    [71, 733, 196, 242, '#d8c850', 4], [75, 762, 22, 22], [75, 843, 22, 22], [75, 925, 22, 22], [382, 850, 144, 63, '#c8c83c'], [436, 813, 81, 29, '#c8c83c'], [378, 946, 163, 193, '#c8c83c', 4],
    [556, 946, 406, 195, '#d8d840', 4], [970, 946, 325, 195, '#d8d840', 4], [1310, 658, 42, 82], [1309, 745, 40, 171, '#c8c83c'], [1309, 745, 40, 45], [1360, 658, 40, 56], [1360, 722, 40, 20],
    [418, -113, 43, 210, '#c8c83c'], [418, 52, 43, 45, '#c8c83c'],
  ],
  lines: [
    ['M520,43H797V335L764,367H520Z', 4], ...pairs([549, 592, 637, 678, 722, 765, 808, 850, 895, 938, 981, 1023, 1067, 1108, 1153, 1196, 1240, 1284], 498, 568),
    ...devs(525).map(x => [`M${x},695V737H${x + 18}M${x + 55},737H${x + 73}V695`, 3] as Trace), ...pairs([579, 618, 654, 698, 740, 781, 824, 863, 908, 950, 994, 1036, 1080, 1121, 1165, 1207, 1250, 1290], 780, 850),
    ['M272,554H345V558M272,610H345M272,790V670M365,670V780H350M370,835V943H280M423,743H498M423,803H498', 4], ['M345,720V980', 4], ['M190,975H243V1000M1108,260H1030M1188,258H1260', 4],
    ['M938,52A64,64 0 1 1 810,52A64,64 0 1 1 938,52M938,200A64,64 0 1 1 810,200A64,64 0 1 1 938,200M940,336A64,64 0 1 1 812,336A64,64 0 1 1 940,336M504,487A64,64 0 1 1 376,487A64,64 0 1 1 504,487M229,1058A64,64 0 1 1 101,1058A64,64 0 1 1 229,1058M368,1058A64,64 0 1 1 240,1058A64,64 0 1 1 368,1058', 4],
  ],
  fills: [
    ['#1800ff', 'M1030,264H1052V310H1030ZM1096,264H1118V310H1096ZM1172,270H1206V303H1172ZM1240,268H1273V302H1240ZM1045,345H1064V372H1045ZM1084,345H1106V372H1084ZM1045,216H1064V243H1045ZM1084,216H1110V243H1084Z'],
    ['#0000ff', 'M285,802H318V832H285ZM285,868H318V904H285ZM355,740H388V776H355ZM355,808H388V838H355ZM355,872H388V910H355ZM355,945H388V980H355Z'],
    ['#ff0000', 'M258,567H293V600H258Z'], ['#ffff00', 'M87,592V616L99,604ZM97,849H108V845L118,854L108,862V858H97Z'],
  ],
  pads: [
    ...run(436, 134, 0, 40.6, 4, 28, 28, 14, 0), ...run(438, 328, 0, 41, 2, 28, 30, 14, 0), ...run(658, 84, 40.5, 0, 3, 31, 31, 15), ...run(618, 326, 40.4, 0, 4, 31, 32, 16),
    [846, 52, 25, 26, 13, true], [902, 52, 25, 26, 13], [874, 171, 25, 26, 13], [874, 227, 25, 26, 13, true], [876, 297, 30, 31, 15], [876, 376, 31, 32, 16, true],
    [400, 487, 32, 32, 16], [480, 487, 31, 32, 16, true], ...run(181, 518, 40.4, 0, 4, 29, 30, 15), [987, 350, 40, 40, 20], [1148, 350, 40, 40, 20], [1309, 350, 40, 40, 20],
    [147, 600, 34, 30, 12, true], [147, 643, 38, 32, 12], [147, 683, 38, 32, 12], [235, 773, 55, 56, 24], [235, 854, 55, 56, 24], [235, 936, 55, 56, 24], [414, 882, 30, 30, 14, true], [493, 882, 31, 31, 15],
    ...run(419, 978, 80, 0, 2, 34, 42, 21, -1), ...run(598, 978, 80.7, 0, 5, 34, 42, 21, -1), ...run(1011, 978, 80.7, 0, 4, 34, 42, 21, -1), ...run(1331, 679, 0, 40, 2, 28, 28, 14), ...run(1329, 771, 0, 40.4, 4, 28, 28, 14, 0),
    [165, 1030, 22, 23, 11], [165, 1085, 24, 25, 12, true], [304, 1030, 22, 23, 11], [304, 1085, 24, 25, 12, true],
  ],
  vias: [[505, 590, 16], [619, 598, 16], [708, 601, 16], [795, 602, 16], [883, 606, 16], [968, 605, 16], [1054, 605, 16], [1141, 605, 16], [1228, 605, 16], [1342, 610, 16], [961, 205], [1353, 153], [643, 448], [965, 420], [1371, 345], [1331, 402], [1318, 442], [1311, 467], [1328, 498], [1320, 571], [710, 660], [1156, 664], [795, 745], [878, 743], [958, 753], [1049, 751], [1129, 753], [1212, 752], [560, 805], [721, 822], [797, 816], [878, 818], [968, 811], [1129, 818], [1212, 824], [573, 924], [1379, 110]],
  parts: [
    ...grid([594, 679, 769, 854, 938], 440, 'h', 'b'), ...grid([1025, 1111, 1197, 1283], 440, 'h', 'r'), ...grid([531, 789, 873, 960, 1044, 1131], 491, 'v', 'b'), [612, 485, 'v', 'b'], [699, 479, 'v', 'b'], [1218, 491, 'v', 'r'],
    ...grid([531, 789, 873, 960, 1044, 1131, 1218], 545, 'v', 'b'), [615, 542, 'v', 'b'], [702, 530, 'v', 'b'], ...grid([546, 633, 723, 808, 892, 966, 1152], 636, 'h', 'r'), ...grid([585, 672, 759, 930, 1009, 1037, 1105, 1191, 1278], 648, 'v', 'b'),
    ...grid([555, 639, 721, 798, 879, 966, 1054, 1133, 1212], 862, 'v', 'b'), [715, 27, 'h', 'r'], [775, 27, 'h', 'b'], [670, 12, 'v', 'r'], [554, 104, 'h', 'o'], [540, 68, 'v', 'o'], [566, 68, 'v', 'o'], [670, 117, 'h', 'o'], [727, 117, 'h', 'o'],
    [177, 897, 'v', 'o'], [1087, 230, 'h', 'o'], [1087, 358, 'h', 'o'], [1052, 230, 'h', 'o'], [1052, 358, 'h', 'o'], [350, 635, 'h', 'r'], [312, 965, 'h', 'o'], [312, 933, 'h', 'o'], [312, 783, 'h', 'o'], [312, 750, 'h', 'o'],
  ],
  rats: ['M436,256L699,326L734,480L702,530', 'M302,518L550,556L702,542L790,556H1228', 'M1309,28L1234,605', 'M493,882L560,875H1225L1380,890', 'M499,978L493,882L535,640', 'M560,484H1200L1250,480', 'M345,590H400L520,632L1310,636', 'M1329,892L1375,960'],
  tags: [[807, 112, 'C28'], [811, 260, 'L2'], [376, 412, 'L1'], [375, 545, 'L3'], [258, 540, 'TVS1'], [268, 637, 'TVS3'], [325, 617, 'C25'], [412, 732, 'F1'], [440, 803, 'C33'], [383, 838, 'VR1'], [273, 800, 'D1'], [376, 932, 'H9'], [97, 970, 'C27'], [237, 970, 'C26'], [1106, 203, 'C30', true], [1262, 243, 'TVS2', true], [1100, 333, 'C31', true]],
  blobs: [[578, 417], [663, 417], [753, 419], [838, 419], [922, 419], [1010, 417], [1095, 419], [1181, 417], [1268, 419], [527, 457], [556, 457], [597, 457], [645, 458], [685, 450], [726, 457], [770, 457], [816, 457], [858, 457], [900, 457], [945, 457], [986, 457], [1030, 457], [1072, 457], [1115, 457], [1158, 457], [1203, 457], [1245, 457], [613, 514], [700, 497], [530, 613], [573, 615], [617, 613], [660, 615], [705, 613], [748, 615], [793, 613], [837, 613], [880, 613], [928, 620], [960, 613], [1008, 615], [1036, 615], [1090, 615], [1140, 620], [1185, 615], [1270, 615], [1313, 645], [577, 749], [640, 749], [735, 749], [820, 749], [905, 749], [1000, 749], [1085, 749], [1170, 749], [1255, 749], [551, 828], [637, 828], [715, 830], [798, 828], [870, 828], [965, 828], [1048, 828], [1130, 828], [1210, 828], [562, 934], [989, 937], [77, 719], [93, 549], [424, 291], [422, 98], [525, 30], [948, 52, 3], [872, 127, 3], [1335, 935], [1378, 404]],
};

const D: Tile = {
  x: 960, y: 520,
  voids: [
    'M940,60L1230,345H752V0H940Z', 'M740,600H905L935,568L1055,690H1160V718H978L905,650H590L625,620H700Z', 'M232,236H440L480,300H600V345H610L560,392H395L340,340L232,290Z', 'M600,345H1225L1330,440L1310,470L1160,345V430H1160V440L1250,520V640L1200,755H1165V690H1160V480L1120,452H830L760,380L600,372Z',
    'M86,317H230V412H86Z', 'M1160,436H1215L1310,520V650L1205,745L1165,745Z', 'M0,150L60,200L80,100V0H230V317H86V412L110,470L60,530L0,510Z', 'M190,495L330,615L440,730L610,870V960H570V905L330,720L300,640L170,500Z',
    'M730,800H795L845,850L870,910V960L900,1005L950,970V1000H870L800,990L700,870V810Z', 'M439,220H530L600,200V345H439Z', 'M510,840L600,870V900H510Z', 'M270,800L313,820L345,850L310,870L250,870Z', 'M810,560L900,500L940,520L900,580H780Z',
  ],
  cuts: [
    ['M0,925H220L300,845V800H45', 9], ['M0,957H235L349,857', 9], ['M725,700V940L780,1020H1270L1320,965V690', 8], ['M990,900H1245L1285,861', 14], ['M575,640V705L740,860', 8, 4, 12, -8],
    ['M624,515V560L575,610V640', 8], ['M664,515V560L590,630V700', 8], ['M704,515L600,615V690', 8], ['M744,515L610,640V690L760,830', 8], ['M785,515L700,590L650,650', 8], ['M825,515L745,580', 8], ['M865,515L800,575', 8], ['M946,508L905,560L870,590', 8],
    ['M132,500L440,790L510,860', 8, 4, 14, -6], ['M460,720H510L600,820L725,940', 8, 5, 14, -6], ['M590,375V420L630,465H1140L1170,490', 9], ['M250,464H90', 8], ['M432,430H280L240,450H0', 9, 2, 0, 14], ['M349,857V830L313,800H50', 8],
    ['M1132,778L1200,735', 12], ['M600,690L650,690L760,800', 7, 3, 10, 8], ['M370,935H470L600,1000', 8], ['M545,0V110L520,130V160', 8], ['M0,505H200', 9, 2, 0, 14], ['M560,640V700L600,740', 7, 3, -10, 6], ['M1180,345L1327,480', 7, 2, -14, 6],
  ],
  hatch: ['M752,0H960L1230,345H752Z', 'M86,317H230V412H86Z', 'M1160,436H1354V757H1160Z', 'M122,490H441V762H122Z', 'M439,-100H600V347H439Z', 'M757,878H991V1000H757Z', 'M478,922H650V1000H478Z', 'M490,853H650V890H490Z', 'M242,-100H322V246H242Z', 'M338,-100H419V246H338Z', 'M1003,890H1326V1022H1003Z', 'M0,150H70V330H0Z', 'M43,900H286V1021H43Z', 'M775,700H856V740H775Z'],
  blue: [
    ['M608,-100V305L540,378H400L358,330V235', 13], ['M1165,347H905L890,368V390L930,432H1160L1250,515V640L1215,685H1050L935,565', 13], ['M1215,435L1305,500V650L1205,750', 9], ['M530,214H600', 13], ['M265,240V275L280,285H350', 12],
    ['M740,590H850L905,585L945,545', 9], ['M600,650L740,570', 4, 3, 0, 12], ['M940,60L1225,345L1327,440', 3, 2, -8, 0], ['M150,0V90L120,130V300', 6, 5, 18, 0], ['M100,0V100L70,140L130,230V300', 4, 3, 8, -6], ['M0,160L90,230H130', 8],
    ['M0,415H200', 12], ['M185,230V410', 12], ['M120,430H240V460', 5], ['M590,640V700L740,850', 4, 4, 12, -8], ['M150,500L440,780L520,850', 4, 4, 14, -6], ['M480,720L600,830L720,930', 4, 3, 14, -6], ['M725,810V830L850,960', 4, 3, 16, 0], ['M1000,900H1245', 3],
    ['M1230,450L1310,530', 3], ['M875,0V345', 3], ['M795,0V345', 3], ['M620,345V470', 3], ['M765,350L830,440H1130', 4, 2, 0, 14], ['M370,250L400,290', 6], ['M210,320V400', 9], ['M600,850L600,900L570,930', 5],
    ...[40, 81, 121, 162, 202].map(y => [`M245,${y}H300L325,${y + 14}H350L365,${y}H410L430,${y - 15}H470`, 5] as Trace),
  ],
  red: [
    ['M378,262L485,390', 14], ['M515,225L557,265V330L560,350', 14], ['M275,270L300,245L345,275L395,240', 10], ['M90,215V280L65,322V440', 26], ['M0,197H60', 12], ['M820,445H1030L1071,405', 8], ['M885,482L905,468H1165', 8],
    ['M1195,480L1225,510V435H1160', 4, 3, 6, -8], ['M770,0L780,40V345', 3], ['M820,0V160L808,180V260L816,280V345', 4], ['M872,0V120L862,150V240L872,260V345', 4], ['M942,0V385H840V400H780', 4], ['M815,375V400H940', 4], ['M845,375V390H960L1000,370', 3],
    ['M990,400H1035L1085,355H1130L1225,425V480', 3, 2, -12, -10], ['M620,345V365', 4, 3, 40, 0], ['M935,685H1165', 3], ['M1180,610L1200,595H1230L1260,640', 3, 3, 6, 14], ['M345,655L370,680V730', 6, 4, -2, 8], ['M185,500L430,740', 3], ['M315,620V670', 4], ['M360,660V735', 16],
    ['M468,738H488L495,758H475Z', 14], ['M510,790L600,870', 4], ['M535,735L590,780', 5, 3, 14, -10], ['M605,750L650,705', 10], ['M560,668V690', 7, 2, -11, 0], ['M550,640L565,630', 10], ['M700,830L725,800H760', 8], ['M700,850V900L720,920', 8], ['M740,830L800,800', 4],
    ['M730,950L780,1022H1300', 4], ['M320,810V850', 12], ['M590,385L585,410', 8], ['M100,520L150,480H200', 5, 2, -16, 10], ['M0,345H35V310L20,280', 6, 3, 8, 8], ['M130,60V140L160,180', 12], ['M95,40V100', 14], ['M100,400V420', 20], ['M215,330H230M215,400H230', 16],
    ['M200,200V240L230,260', 6], ['M270,430H310M265,450L285,435', 5], ['M840,1013H1020', 4], ['M1190,600L1275,660L1250,680', 3], ['M515,215L480,240', 5], ['M410,0L470,20', 3, 3, 0, 60],
  ],
  mag: [['M1195,516H1350M1190,597H1350M1190,678H1350', 4], ['M1356,0V345', 2], ['M250,464V480', 3], ['M44,1000V1015', 2]],
  green: [[26, 545, 34, 72, '#008000', 6], [447, 758, 62, 14, '#006400'], [575, 660, 10, 88, '#006400']],
  boxes: [
    [112, 317, 97, 95], [604, 487, 402, 147], [604, 651, 244, 40], [775, 700, 81, 40], [815, 651, 33, 40, '#a0a050'], [488, 851, 162, 40], [610, 851, 40, 40, '#c8c83c'], [476, 920, 122, 80], [558, 920, 40, 40], [610, 920, 40, 80], [610, 960, 40, 40],
    ...[757, 824, 886, 949].flatMap(x => [[x, 878, 42, 122], [x, 958, 42, 42]] as Box[]), [1003, 828, 323, 194, '#ffff30', 4], [1159, 434, 195, 324, '#d8d840', 4], [43, 826, 243, 195, '#d8d840', 4], [301, 901, 162, 97, '#d8d840'],
    [330, 985, 22, 13], [410, 985, 22, 13], [71, 997, 24, 24], [153, 997, 24, 24], [234, 997, 24, 24], [20, 538, 42, 80], [19, 626, 42, 170, '#c8c83c'], [0, 312, 18, 20],
    [241, 203, 40, 43, '#c8c83c'], [338, 203, 40, 43, '#c8c83c'], [212, 268, 16, 16],
  ],
  lines: [
    ['M120,487H443V763H150L120,733Z', 4], ['M457,502H449V572H457M500,502H508V572H500M520,502V572M583,502V573M457,676H449V746H457M500,676H508V746H500M520,676V748M583,676V748', 4], ['M338,364A40,40 0 1 1 257,364A40,40 0 1 1 338,364', 4], ['M514,358H521V364H514Z', 3],
  ],
  fills: [['#ffff00', 'M260,380H335Q320,404 297,404Q272,404 260,380ZM329,1017H355L342,1005ZM161,992V982H153L165,971L175,982H169V992Z'], ['#003c00', 'M28,548H58V615H28Z']],
  pads: [
    [494, 291, 98, 99, 40], [1271, 291, 98, 99, 40], [19, 230, 38, 38, 18], [297, 345, 38, 28, 12, true], [297, 385, 38, 28, 12], ...run(624, 508, 40.3, 0, 10, 30, 30, 15, 9), ...run(626, 671, 40.2, 0, 6, 29, 29, 14, 5),
    ...run(795, 719, 40, 0, 2, 28, 28, 14, 0), ...run(509, 870, 40.3, 0, 4, 28, 29, 14, 3), ...run(496, 939, 40.4, 0, 3, 27, 28, 14, 2), ...run(496, 980, 40.4, 0, 3, 27, 28, 14), ...run(630, 939, 0, 41, 2, 27, 28, 14, 1),
    ...[778, 845, 906, 970].flatMap(x => run(x, 899, 0, 40.5, 3, 28, 28, 14, 2)), ...run(1043, 861, 80.7, 0, 4, 34, 42, 21, -1), ...run(1191, 476, 0, 80.7, 4, 40, 34, 20, -1), ...run(84, 857, 81, 0, 3, 53, 54, 24),
    ...run(339, 957, 41.5, 0, 3, 29, 38, 12, 0), ...run(160, 565, 0, 40.4, 4, 29, 30, 15), ...run(402, 605, 0, 40.4, 3, 29, 30, 15), ...run(41, 558, 0, 41, 2, 28, 28, 14), ...run(39, 651, 0, 40.4, 4, 28, 28, 14, 0),
  ],
  vias: [[52, 490, 16], [591, 375], [619, 373], [657, 373], [697, 373], [737, 373], [777, 375], [815, 370], [843, 370], [869, 369], [859, 411], [1071, 405], [432, 430], [357, 464], [63, 33], [132, 44], [155, 86], [159, 124], [139, 174], [203, 211], [81, 225], [41, 281], [28, 323], [20, 347], [38, 378], [30, 451], [94, 464], [273, 800], [313, 830], [349, 857], [738, 842], [1132, 778]],
  parts: [
    ...grid([619, 657, 697, 736], 425, 'v', 'o'), [474, 609, 'h', 'b'], [547, 607, 'h', 'b'], [476, 639, 'h', 'b'], [547, 639, 'h', 'b'], [451, 795, 'h', 'b'], [505, 795, 'h', 'r'], [449, 834, 'h', 'b'], [506, 834, 'h', 'r'], [449, 869, 'h', 'b'],
    [778, 828, 'h', 'r'], [778, 857, 'h', 'r'], ...grid([845, 906, 970], 828, 'h', 'b'), ...grid([845, 906, 970], 857, 'h', 'b'), [91, 612, 'h', 'b'], [80, 573, 'v', 'b'], [104, 573, 'v', 'b'], [222, 276, 'h', 'r'],
    [180, 42, 'h', 'o'], [190, 86, 'h', 'o'], [180, 137, 'h', 'o'], [180, 180, 'h', 'o'], [172, 230, 'h', 'o'],
  ],
  rats: ['M190,-110L172,180', 'M180,42L260,61H358', 'M301,150L297,345', 'M297,385L215,410L115,560L160,646', 'M39,772L402,686L480,750', 'M0,762L630,812L780,828H970', 'M736,435L946,508', 'M620,430L626,671L630,870', 'M795,719L770,825', 'M480,502L490,609L480,745', 'M449,820L427,957', 'M39,772L84,857'],
  tags: [[198, 254, 'R1'], [256, 310, 'C5'], [80, 303, 'SW1'], [1157, 422, 'H2'], [602, 475, 'U3'], [604, 638, 'C2'], [768, 688, 'C1'], [196, 208, 'C3', true]],
  blobs: [[108, 490], [456, 468], [523, 477, 4], [458, 586], [532, 585], [453, 645], [523, 651, 4], [488, 772], [433, 812], [493, 812], [476, 858], [513, 909], [615, 907], [306, 888], [45, 813], [27, 525], [75, 539], [99, 539], [25, 615], [761, 806], [828, 806], [888, 806], [952, 811], [1005, 815], [619, 391], [654, 391], [697, 391], [736, 391], [228, 262], [322, 345], [150, 86], [205, 65]],
};
const tiles = [A, B, C, D];
const at = (t: Tile) => `translate(${t.x} ${t.y}) scale(.33333)`;

const Traces = ({ list, c }: { list: Trace[]; c: string }) => (
  <g fill="none" stroke={c}>
    {list.flatMap(([d, w, n = 1, dx = 0, dy = 0], i) =>
      Array.from({ length: n }, (_, k) => <path key={`${i}-${k}`} d={d} strokeWidth={w} transform={k ? `translate(${dx * k} ${dy * k})` : undefined} />))}
  </g>
);

const PadMark = ({ p: [x, y, w, h, o, sq] }: { p: Pad }) => {
  const ring = 9;
  const hy = w > h + 2 || Math.abs(w - h) < 12 || sq ? o : o * 1.7;
  return (
    <g>
      {sq ? <rect x={x - w / 2 - ring / 2} y={y - h / 2 - ring / 2} width={w + ring} height={h + ring} fill="#000018" stroke="#c000c0" strokeWidth="2" strokeDasharray="5 9" />
        : <ellipse cx={x} cy={y} rx={w / 2 + ring / 2} ry={h / 2 + ring / 2} fill="#000018" stroke="#c000c0" strokeWidth="2" strokeDasharray="5 9" />}
      {sq ? <rect x={x - w / 2} y={y - h / 2} width={w} height={h} fill="#c0c0c0" /> : w === 34 && h === 46
        ? <rect x={x - 17} y={y - 23} width="34" height="46" rx="12" fill="#c0c0c0" /> : <ellipse cx={x} cy={y} rx={w / 2} ry={h / 2} fill="#c0c0c0" />}
      <ellipse cx={x} cy={y} rx={o / 2} ry={hy / 2} fill="#009090" />
    </g>
  );
};

const PartMark = ({ p: [x, y, o, c] }: { p: Part }) => {
  const y0 = c === 'o' ? '#80801e' : c === 'r' ? '#e6e600' : '#d4d43a';
  const f = c === 'r' ? '#ff0000' : c === 'o' ? '#2000e0' : '#0000ff';
  return (
    <g transform={`translate(${x} ${y})${o === 'h' ? ' rotate(90)' : ''}`}>
      <rect x="-11" y="-22" width="22" height="44" fill={c === 'o' ? '#200040' : '#000080'} stroke={y0} strokeWidth="3.500" />
      <rect x="-8" y="-19" width="16" height="14" fill={f} /><rect x="-8" y="5" width="16" height="14" fill={f} />
      <rect x="-8" y="-4" width="16" height="8" fill={c === 'b' ? '#0000ff' : '#a000a0'} />
      <rect x="-3" y="-5" width="6" height="10" fill={c === 'o' ? '#b000b0' : '#e6e600'} />
    </g>
  );
};

const pins = [712, 733, 832, 852, 872, 892, 912, 932, 953, 973];

/* parallel diagonals across the whole board, eight pixels apart */
const diagonals = Array.from({ length: 210 }, (_, i) => `M${-240 + i * 8},100l780,780`).join('');

const HatchArea = ({ d, t }: { d: string; t: Tile }) => {
  const id = React.useId();
  return (
    <g>
      <clipPath id={id}><path d={d} transform={at(t)} /></clipPath>
      <g clipPath={`url(#${id})`}><use href="#diagonals" /></g>
    </g>
  );
};

const Board = () => (
  <svg width="1634" height="867" viewBox="248 93 1634 867" shapeRendering="crispEdges">
    <defs>
      <path id="diagonals" d={diagonals} stroke="#f000f0" strokeWidth="1" fill="none" />
      <mask id="pour" maskUnits="userSpaceOnUse" x="540" y="150" width="900" height="740">
        <rect x="558" y="183" width="845" height="680" fill="#fff" />
        {tiles.map((t, i) => (
          <g key={i} transform={at(t)}>
            {t.voids.map((d, k) => <path key={k} d={d} fill="#000" />)}
            <Traces list={t.cuts} c="#000" />
          </g>
        ))}
      </mask>
    </defs>
    <rect x="558" y="183" width="845" height="680" fill="#000" />
    {tiles.map((t, i) => (
      <g key={i}>{t.hatch.map((d, k) => <HatchArea key={k} d={d} t={t} />)}</g>
    ))}
    <rect x="558" y="183" width="845" height="680" fill="#0000ff" mask="url(#pour)" />
    {tiles.map((t, i) => (
      <g key={i} transform={at(t)}>
        <Traces list={t.red} c="#d80000" />
        <Traces list={t.blue} c="#0000e8" />
        <Traces list={t.mag} c="#f000f0" />
        {t.green.map(([x, y, w, h, c, s], k) => <rect key={k} x={x} y={y} width={w} height={h} fill="none" stroke={c} strokeWidth={s ?? 3} />)}
        {t.fills.map(([c, d], k) => <path key={k} d={d} fill={c} />)}
      </g>
    ))}
    <g transform={at(A)}>
      {pins.map(x => (
        <g key={x}>
          <path d={`M${x},660V692M${x},778V810`} stroke="#e00000" strokeWidth="10" /><path d={`M${x},692V702M${x},768V778`} stroke="#f0f" strokeWidth="10" />
        </g>
      ))}
      <path d="M1202,770V810M1222,770V810" stroke="#a00000" strokeWidth="10" />
    </g>
    <path d="M558.500,183V863M1402.500,183V863" stroke="#b0b0c0" strokeWidth="1.600" strokeDasharray="9 6" />
    <path d="M558,183.500H1403M558,863.500H1403" stroke="#c0c0c8" strokeWidth="1" strokeDasharray="9 6" />
    {tiles.map((t, i) => (
      <g key={i} transform={at(t)}>
        {t.pads.map((p, k) => <PadMark key={k} p={p} />)}
        {t.parts.map((p, k) => <PartMark key={k} p={p} />)}
        {t.vias.map(([x, y, r = 9], k) => (
          <g key={k}><circle cx={x} cy={y} r={r + 4} fill="#180018" /><circle cx={x} cy={y} r={r} fill="#c8c0c0" /><circle cx={x} cy={y} r={r * 0.45} fill="#806000" /></g>
        ))}
        {t.boxes.map(([x, y, w, h, c, s], k) => <rect key={k} x={x} y={y} width={w} height={h} fill="none" stroke={c ?? '#e6e620'} strokeWidth={s ?? 3} />)}
        <Traces list={t.lines} c="#c8c83c" />
        {t.blobs.map(([x, y, r = 8], k) => <rect key={k} x={x - r} y={y - 3.500} width={r * 2} height="7" fill="#e6e600" />)}
        <g fill="none" stroke="#a8a890" strokeWidth="3">{t.rats.map((d, k) => <path key={k} d={d} />)}</g>
        <g fontFamily='"Liberation Sans", Arial, sans-serif' fontSize="38">
          {t.tags.map(([x, y, s, m], k) => (
            <text key={k} transform={`translate(${x} ${y})${m ? ' scale(-1 1)' : ''}`} fill={m ? '#80801e' : '#e0e020'}>{s}</text>
          ))}
        </g>
      </g>
    ))}
    <g transform={at(A)} fontFamily='"Liberation Sans", Arial, sans-serif' fontSize="38" fill="#0000b4">
      <text transform="matrix(0 1 1 0 148 683)" textLength="142">HUY LE</text>
      <text transform="matrix(0 1 1 0 108 706)" textLength="96">BKRA</text>
    </g>
    <g stroke="#fff" fill="none"><circle cx="558.300" cy="863.300" r="20" /><path d="M538,843L578.500,883.500M538,883.500L578.500,843" /></g>
  </svg>
);

/* ---------- active bar icons ---------- */
const barIcons: React.ReactNode[] = [
  <path key="f" d="M2 2h14l-1 3-4 3v8H7V8L3 5z" fill="#b8dcea" />,
  <g key="m"><path d="M7 4h5a4.500 4.500 0 0 1 0 9H7" fill="none" stroke="#4f7fd8" strokeWidth="3" /><path d="M7 13h5a4.500 4.500 0 0 0 4-3" fill="none" stroke="#e88080" strokeWidth="3" /><path d="M3 2.500h2M3 8h2M3 14h2" stroke="#a8d8c8" strokeWidth="2" /></g>,
  <path key="c" d="M9 2v14M2 9h14M7.500 4L9 2l1.500 2M4 7.500L2 9l2 1.500M14 7.500L16 9l-2 1.500M7.500 14L9 16l1.500-2" fill="none" stroke="#5a80d0" />,
  <rect key="s" x="2.500" y="2.500" width="13" height="13" fill="none" stroke="#6a90e8" strokeDasharray="2.500 1.500" />,
  <g key="a"><path d="M3 6h3v7H3zM12 6h3v7h-3z" fill="#e88080" /><path d="M7 2h3.500v11H7z" fill="#b8e0f0" /><path d="M2 15h14" stroke="#7ab0f0" strokeWidth="2" /></g>,
  <g key="ch"><path d="M1 5h16M1 8h16M1 11h16M1 14h16M5 1v16M8 1v16M11 1v16M14 1v16" stroke="#9ac0d8" /><rect x="3" y="3" width="12" height="12" fill="#d8dcd8" stroke="#7fa8c0" /></g>,
  <g key="r" fill="none" stroke="#d8982c" strokeWidth="1.400"><circle cx="4" cy="14" r="2" /><circle cx="14.500" cy="4" r="2" /><path d="M5.500 12.500L13 5.500M3 9V3h5M6 1l3 2-3 2" /></g>,
  <g key="w" fill="none" strokeWidth="1.500"><path d="M2.500 12V9c0-5 3.500-5 3.500-1v2c0 4 3 4 3 0V7c0-4 3-4 3 0v3c0 3 3 3 3 0" stroke="#7090c8" /><circle cx="3" cy="13.500" r="1.500" stroke="#b07a20" /><circle cx="15" cy="13.500" r="1.500" stroke="#b07a20" /></g>,
  <g key="v"><circle cx="8" cy="7" r="4.500" fill="#404040" stroke="#f0b818" strokeWidth="3.500" /><path d="M8 11v6" stroke="#f0a818" strokeWidth="3" /><path d="M13 7h4" stroke="#60c060" strokeWidth="3" /></g>,
  <path key="p" d="M7 3h9v11H2V8h5z" fill="#c0e4f0" />,
  <g key="k" fill="none"><rect x="1.500" y="1.500" width="15" height="15" stroke="#f080d0" strokeWidth="1.500" /><circle cx="6" cy="12" r="1.700" stroke="#d8982c" /><circle cx="12" cy="6" r="1.700" stroke="#d8982c" /><path d="M7 11l4-4" stroke="#d8982c" /></g>,
  <g key="d" fill="none"><path d="M3 4v12h12V4" stroke="#7aa0e0" strokeWidth="1.500" /><circle cx="3" cy="3" r="1.500" stroke="#d8982c" /><circle cx="15" cy="3" r="1.500" stroke="#d8982c" /><text x="5" y="13" fontSize="8.500" fill="#d0d8e8" fontFamily="Open Sans, sans-serif">10</text></g>,
  <text key="t" x="3" y="16" fontSize="18" fill="#6aa8f0" fontFamily='"Liberation Serif", serif' fontWeight="700">A</text>,
  <path key="l" d="M2 16L15 3" stroke="#6aa8f0" strokeWidth="2" />,
];
const menus: [string, string, string, number][] = [
  ['', 'F', 'ile', 39], ['', 'E', 'dit', 42], ['', 'V', 'iew', 48], ['Proje', 'c', 't', 62], ['', 'P', 'lace', 51], ['', 'D', 'esign', 62],
  ['', 'T', 'ools', 52], ['Ro', 'u', 'te', 55], ['', 'R', 'eports', 67], ['', 'W', 'indow', 71], ['', 'H', 'elp', 50],
];

export default function App() {
  return (
    <Shell>
      <GlobalStyle />
      <TitleBar>
        <QuickIcons>
          <QuickCell $w={30}><Logo /></QuickCell>
          <QuickCell $w={27}><Disk c="#7670b8" l="#f0eef8" /></QuickCell>
          <QuickCell $w={28}><DiskStack /></QuickCell>
          <QuickCell $w={28}><OpenFolder /></QuickCell>
          <QuickCell $w={29}><OpenFolder doc /></QuickCell>
          <QuickCell $w={27}><Undo c="#6fa0dc" /></QuickCell>
          <QuickCell $w={20}><Undo c="#707070" flip /></QuickCell>
        </QuickIcons>
        <WindowTitle>Raspberry.PrjPcb - Altium Designer (21.3.2)</WindowTitle>
        <TitleSearch><Magnifier />Search</TitleSearch>
        <WinButton $w={58}><svg width="9" height="14"><path d="M0 12.500h8" stroke="#fff" strokeWidth="2" /></svg></WinButton>
        <WinButton $w={37}><svg width="12" height="12" viewBox="0 0 12 12" fill="none" stroke="#fff" strokeWidth="1.300"><path d="M.7 5h7.600v6H.7zM3.500 5V1h8v6h-3M.7 6h7.600M3.500 2h8" /></svg></WinButton>
        <WinButton $w={5} />
        <WinButton $w={45} $close><svg width="10" height="10" viewBox="0 0 10 10"><path d="M1 1l8 8M9 1L1 9" stroke="#fff" strokeWidth="2.200" /></svg></WinButton>
      </TitleBar>
      <MenuBar>
        {menus.map(([a, u, b, w]) => <MenuItem key={a + u + b} $w={w}>{a}<u>{u}</u>{b}</MenuItem>)}
        <MenuRight>
          <Pill $w={69} $gap={5}><svg width="11" height="10" viewBox="0 0 11 10"><path d="M0 9c1-4 3-5 6-5V1l5 4-5 4V6.500C4 6.500 2 7 0 9z" fill="#6ab0f4" /></svg>Share</Pill>
          <Pill $w={138} $blue $gap={7}><svg width="10" height="14" viewBox="0 0 10 14" fill="none" stroke="#c8d8e8"><path d="M1 2l3-1 5 3v6l-5 3-3-1V8l5-2M3 3l4 2.500v3L3 11M1 2v4" /></svg>Buy Online Now</Pill>
          <Divider $l={1} $r={7} /><House /><Divider $l={4} $r={4} $h={0} /><Gear s={14} c="#fff" h="#424242" /><Divider $l={7} $r={7} />
          <svg width="14" height="12" viewBox="0 0 14 12"><path d="M1 8c0-5 4-8 7-7L3 7l-1 4zM6 11l5-7 2-3v3c1 4-3 7-6 7z" fill="#eee" /><path d="M0 12L13 0" stroke="#eee" strokeWidth="1" /></svg>
          <MenuItem $w={109}>&nbsp;Not Connected</MenuItem>
          <Divider $l={1} $r={7} />
          <svg width="15" height="15" viewBox="0 0 15 15"><circle cx="7.500" cy="7.500" r="7" fill="#fff" /><circle cx="7.500" cy="5.500" r="2.500" fill="#424242" /><path d="M3 11.500c1-3 8-3 9 0-2 2-7 2-9 0z" fill="#424242" /></svg>
          <TabCaret />
        </MenuRight>
      </MenuBar>
      <Body>
        <LeftColumn>
          <PanelHead>
            <PanelHeadTitle>Projects</PanelHeadTitle>
            <svg width="50" height="12" viewBox="0 0 50 12"><path d="M0 3h7L3.500 9z" fill="#fff" /><path d="M21 1.500h5M22 1v5M25 1v5M20 6.500h7M23.500 7v5" stroke="#fff" strokeWidth="1.300" /><path d="M41 3l5 6M46 3l-5 6" stroke="#fff" strokeWidth="1.700" /></svg>
          </PanelHead>
          <PanelBody>
            <PanelTools>
              <ToolCell $w={27}><Disk c="#808080" l="#b0b0b0" /></ToolCell>
              <ToolCell $w={34}>
                <svg width="18" height="16" viewBox="0 0 18 16" fill="#e8f0fa" stroke="#5a88b8"><path d="M5 .5h6l2 2v8H5zM3 2.500h6l2 2v8H3zM.5 5h6l2 2v8h-8z" transform="translate(2 0)" /><path d="M4 9h4M4 11h4M4 13h4" /></svg>
              </ToolCell>
              <ToolCell $w={31}><svg width="16" height="16" viewBox="0 0 16 16"><path d="M0 2h5l1 2h8v8H0z" fill="#e8b868" /><circle cx="11" cy="9" r="4" fill="#c8e0f0" stroke="#7f98a8" /><path d="M8 12l-4 4" stroke="#d8982c" strokeWidth="2" /></svg></ToolCell>
              <ToolCell $w={25}><svg width="16" height="16" viewBox="0 0 16 16"><path d="M0 1h5l1 2h7v9H0z" fill="#e8b868" /><circle cx="11" cy="11" r="3" fill="none" stroke="#90a8b8" strokeWidth="3.500" /></svg></ToolCell>
              <Divider $l={-3} $r={11} $h={20} />
              <ToolCell $w={20}><Gear s={14} c="#9aa8b0" h="#404040" /></ToolCell>
            </PanelTools>
            <TreeBox>
              <TreeSearch><Magnifier />Search</TreeSearch>
              <TreeRule />
              {tree.map((n, i) => {
                const Icon = iconFor[n.k];
                return (
                  <Row key={i} $indent={Math.max(0, n.i - 29)}>
                    {n.k === 'group' ? <Divider $l={6} $r={-1} $h={0} /> : <ArrowCell>{n.o !== undefined && <Twist open={n.o} />}</ArrowCell>}
                    <IconCell><Icon /></IconCell>
                    <Label $w={227 - n.i - 16} $mode={n.m} $rule={!n.n && i > 1}>
                      <Name $w={181 - n.i - 19} $bold={n.b}>{n.t}</Name>
                      {n.d && <DocMark c={n.d} />}
                    </Label>
                  </Row>
                );
              })}
            </TreeBox>
          </PanelBody>
          <BottomTabs>
            <ArrowPair $w={52}><span><Tri left c="#888" /></span><span><Tri c="#fff" /></span></ArrowPair>
            <Divider $l={1} $r={1} $h={0} />
            <PanelTab $w={66} $active>Projects</PanelTab><PanelTab $w={77}>Navigator</PanelTab><PanelTab $w={43}>PCB</PanelTab>
          </BottomTabs>
        </LeftColumn>
        <Center>
          <DocTabs>
            <DocTab $w={159} $gap={5}><SchIcon />IOT_BOARD1.SchDoc</DocTab>
            <DocTab $w={97} $gap={5}><House blue />Home Page</DocTab>
            <DocTab $w={217} $gap={4} $active><PcbIcon />(6) IOT_RASPBERRY.PcbDoc *<TabCaret /></DocTab>
            <DocTab $w={137} $gap={5}>
              <svg width="13" height="15" viewBox="0 0 13 15"><path d="M2 .5h7l3.500 3.500v10.500H2z" fill="#eef2fa" stroke="#9ab" /><circle cx="4.500" cy="8" r="3" fill="none" stroke="#2f78d0" strokeWidth="1.800" /><path d="M2 8h5" stroke="#2f78d0" strokeWidth="1.200" /></svg>PCB1.PcbDoc.htm
            </DocTab>
            <DocTab $w={214} $gap={5}><SchIcon />[7] SOURCE_MODULE.SchDoc</DocTab>
            <DocTab $w={183} $gap={5}><SchIcon />[6] DO_MODULE.SchDoc</DocTab>
            <DocTab $w={180} $gap={5}><SchIcon />[4] AI_MODULE.SchDoc</DocTab>
          </DocTabs>
          <Canvas>
            <Board />
            <ActiveBar>
              {barIcons.map((g, i) => (
                <ActiveCell key={i} $menu={i > 1} $line={i === 4}><svg width="18" height="18" viewBox="0 0 18 18">{g}</svg></ActiveCell>
              ))}
            </ActiveBar>
          </Canvas>
          <LayerBar>
            <LayerSet><i />LS</LayerSet>
            <ArrowPair $w={52}><span><Tri left c="#888" /></span><span><Tri c="#fff" /></span></ArrowPair>
            <Divider $l={1} $r={1} $h={0} />
            {layers.map(([t, c, w, on]) => <LayerTab key={t} $w={w} $active={on}><Swatch $c={c} />{t}</LayerTab>)}
          </LayerBar>
        </Center>
        <RightBar>
          <SideTab $h={89}>Components</SideTab><SideTab $h={166}>Manufacturer Part Search</SideTab><SideTab $h={72}>Properties</SideTab>
        </RightBar>
      </Body>
      <Status>
        <StatusCell $w={140}>X:-740mil Y:5520mil</StatusCell><StatusCell $w={87}>Grid: 5mil</StatusCell><StatusCell $w={253}>(Hotspot Snap)</StatusCell>
        <StatusRule $r={486} /><StatusRule $r={890} />
        <PanelsButton>Panels</PanelsButton>
      </Status>
    </Shell>
  );
}
